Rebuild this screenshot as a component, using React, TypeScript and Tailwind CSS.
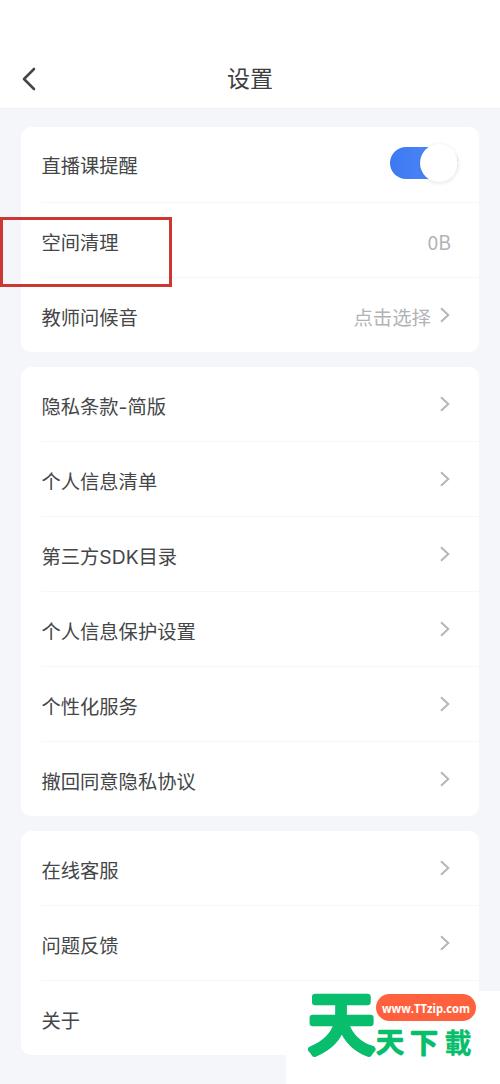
type Item = {
  label: string;
  value?: string;
  arrow?: boolean;
  toggle?: boolean;
};

const groups: Item[][] = [
  [
    { label: "直播课提醒", toggle: true },
    { label: "空间清理", value: "0B" },
    { label: "教师问候音", value: "点击选择", arrow: true },
  ],
  [
    { label: "隐私条款-简版", arrow: true },
    { label: "个人信息清单", arrow: true },
    { label: "第三方SDK目录", arrow: true },
    { label: "个人信息保护设置", arrow: true },
    { label: "个性化服务", arrow: true },
    { label: "撤回同意隐私协议", arrow: true },
  ],
  [
    { label: "在线客服", arrow: true },
    { label: "问题反馈", arrow: true },
    { label: "关于", arrow: true },
  ],
];

function Arrow() {
  return (
    <svg width="10" height="16" viewBox="0 0 10 16" fill="none" className="ml-[9px] mr-px">
      <path d="M1 1.2L8.3 8L1 14.8" stroke="#b4b6b9" strokeWidth="2" />
    </svg>
  );
}

function Toggle() {
  return (
    <button
      role="switch"
      aria-checked="true"
      className="-mr-[7px] mb-[3px] flex h-8 w-[68px] items-center justify-end rounded-full bg-linear-to-r from-[#3c78f0] to-[#5590fc]"
    >
      <span className="size-[38px] shrink-0 rounded-full bg-white shadow-[0_1px_4px_rgba(0,0,0,0.12)]" />
    </button>
  );
}

function Row({ item, last }: { item: Item; last: boolean }) {
  return (
    <div className="pl-5">
      <div
        className={`flex items-center justify-between pr-7 ${
          last ? "h-[74px]" : "h-[75px] border-b border-[#f7f7f8]"
        } ${item.toggle ? "h-[76px]" : ""}`}
      >
        <span
          className={`pl-[0.5px] text-[19.3px] leading-7 text-[#444648] ${
            item.toggle ? "pt-[2px]" : "pt-[5px]"
          }`}
        >
          {item.label}
        </span>
        <div className="flex items-center text-[19.4px] leading-7 text-[#b2b3b6]">
          {item.value && (
            <span className="pt-[3px] font-['Noto_Sans_CJK_SC',sans-serif]">{item.value}</span>
          )}
          {item.toggle && <Toggle />}
          {item.arrow && <Arrow />}
        </div>
      </div>
    </div>
  );
}

function Watermark() {
  return (
    <div className="absolute bottom-0 right-0 h-[93px] w-[214px] bg-white">
      <svg width="214" height="93" viewBox="0 0 214 93" className="overflow-visible">
        <g
          fill="#08bd6c"
          stroke="#08bd6c"
          strokeLinejoin="round"
          strokeLinecap="round"
          fontFamily="'Noto Sans CJK SC', sans-serif"
          fontWeight="400"
        >
          <text x="22.5" y="57" fontSize="66" strokeWidth="6.5">
            天
          </text>
          <text x="90.5" y="61" fontSize="27" strokeWidth="2.4">
            天
          </text>
          <text x="124.5" y="61.5" fontSize="27" strokeWidth="2.4">
            下
          </text>
          <text
            x="158.5"
            y="61.5"
            fontSize="27"
            fontWeight="700"
            strokeWidth="0.3"
            fontFamily="'Noto Sans CJK TC', sans-serif"
          >
            載
          </text>
        </g>
        <rect x="90" y="3" width="100" height="27" rx="13.5" fill="#ff613d" />
        <text
          x="96"
          y="21.5"
          textLength="88"
          lengthAdjust="spacingAndGlyphs"
          fill="white"
          fontSize="13"
          fontWeight="700"
          fontFamily="'Open Sans', sans-serif"
        >
          www.TTzip.com
        </text>
      </svg>
    </div>
  );
}

export default function App() {
  return (
    <div className="relative h-[1084px] w-[500px] overflow-hidden bg-[#f5f6fa] font-['Inter','Noto_Sans_CJK_SC',sans-serif]">
      <header className="grid h-[109px] grid-cols-3 items-end border-b border-[#f1f1f3] bg-white px-5 pb-[11px]">
        <button className="flex h-9 items-center" aria-label="返回">
          <svg width="18" height="24" viewBox="0 0 18 24" fill="none">
            <path
              d="M14 2L4 12L14 22"
              stroke="#444648"
              strokeWidth="2.6"
              strokeLinecap="round"
              strokeLinejoin="round"
            />
          </svg>
        </button>
        <h1 className="text-center text-[23px] leading-9 text-[#3c3e40]">设置</h1>
      </header>

      <main className="flex flex-col gap-[15px] px-[21px] pt-[18px]">
        {groups.map((items, i) => (
          <section key={i} className="rounded-[10px] bg-white">
            {items.map((item, j) => (
              <Row key={item.label} item={item} last={j === items.length - 1} />
            ))}
          </section>
        ))}
      </main>

      {/* highlighted row */}
      <div className="absolute left-0 top-[217px] h-[70px] w-[172px] border-[3px] border-[#cb3733]" />
      <Watermark />
    </div>
  );
}
